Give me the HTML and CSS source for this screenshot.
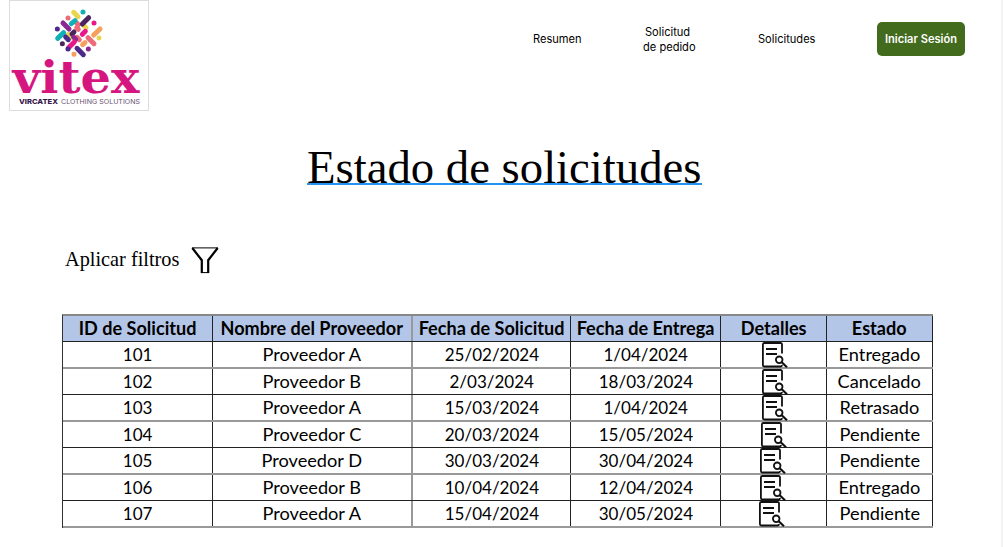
FILE: index.html
```html
<!DOCTYPE html>
<html lang="es">
<head>
<meta charset="utf-8">
<title>Estado de solicitudes</title>
<link rel="stylesheet" href="styles.css">
</head>
<body>
<svg class="defs" width="0" height="0">
  <symbol id="doc" viewBox="0 0 26 26">
    <g fill="none" stroke="#111" stroke-width="1.8">
      <path d="M20 11.5V2.5Q20 1 18.5 1H2.3Q.9 1 .9 2.5V23Q.9 24.5 2.3 24.5H18.5Q20 24.5 20 23"/>
      <path d="M4 7H15M4 12H15"/>
      <circle cx="17.2" cy="17.8" r="3.3"/>
      <path d="M19.7 20.3L25 25.2" stroke-width="2.2"/>
    </g>
  </symbol>
</svg>
<header class="top">
  <svg class="logo" viewBox="0 0 140 111" role="img" aria-label="Vitex">
    <rect x=".5" y=".5" width="139" height="110" fill="#fff" stroke="#dcdcdc"/>
    <g transform="translate(36 0) scale(.3333)" fill="none" stroke-width="15" stroke-linecap="round">
      <path stroke="#e8d44d" d="M86 37L99 50M116 76L123 83M71 103L79 111M162 114h.1"/>
      <path stroke="#ef6a78" d="M69 54h.1M93 67L100 74M95 83L100 88M129 113L147 131M96 112L103 119"/>
      <path stroke="#0fb0b8" d="M114 36h.1M79 71L90 62M38 115L56 98"/>
      <path stroke="#4a2560" d="M112 72L131 53M81 102L87 96M52 131h.1"/>
      <path stroke="#8a2a90" d="M130 147h.1M54 69L72 87M86 112L92 118"/>
      <path stroke="#e8178a" d="M147 69h.1M112 103L121 94M70 144L88 126"/>
      <path stroke="#f5a05c" d="M146 105L165 87M113 134L120 128M87 163h.1"/>
      <path stroke="#4b2a8c" d="M37 87h.1M62 111L70 119M69 147h.1M96 145L115 164"/>
    </g>
    <text class="logo-name" x="3.5" y="93" textLength="127" lengthAdjust="spacingAndGlyphs">vitex</text>
    <text class="logo-sub logo-strong" x="10" y="103.7" textLength="39" lengthAdjust="spacingAndGlyphs">VIRCATEX</text>
    <text class="logo-sub" x="52" y="103.7" textLength="79" lengthAdjust="spacingAndGlyphs">CLOTHING SOLUTIONS</text>
  </svg>
  <nav class="nav">
    <a class="n1">Resumen</a>
    <a class="n2">Solicitud<br><span class="second">de pedido</span></a>
    <a class="n3">Solicitudes</a>
    <a class="login">Iniciar Sesión</a>
  </nav>
</header>
<h1 class="title"><span class="title-text">Estado de solicitudes</span></h1>
<div class="filter">
  <span class="filter-text">Aplicar filtros</span>
  <svg class="funnel" viewBox="0 0 28 27"><path d="M1 .9H27" stroke="#000" fill="none"/><path d="M1.3 1L10.8 13.2V26M26.7 1L17.2 13.2V26" stroke="#000" stroke-width="2.2" fill="none"/><path d="M10 25.6H18" stroke="#000"/></svg>
</div>
<main class="grid">
  <div class="row head"><b><i>ID de Solicitud</i></b><b><i>Nombre del Proveedor</i></b><b><i>Fecha de Solicitud</i></b><b><i>Fecha de Entrega</i></b><b><i>Detalles</i></b><b><i>Estado</i></b></div>
  <div class="row"><b><i class="num">101</i></b><b><i>Proveedor A</i></b><b><i class="num">25/02/2024</i></b><b><i class="num">1/04/2024</i></b><b><svg class="doc"><use href="#doc"/></svg></b><b><i>Entregado</i></b></div>
  <div class="row"><b><i class="num">102</i></b><b><i>Proveedor B</i></b><b><i class="num">2/03/2024</i></b><b><i class="num">18/03/2024</i></b><b><svg class="doc"><use href="#doc"/></svg></b><b><i>Cancelado</i></b></div>
  <div class="row"><b><i class="num">103</i></b><b><i>Proveedor A</i></b><b><i class="num">15/03/2024</i></b><b><i class="num">1/04/2024</i></b><b><svg class="doc"><use href="#doc"/></svg></b><b><i>Retrasado</i></b></div>
  <div class="row"><b><i class="num">104</i></b><b><i>Proveedor C</i></b><b><i class="num">20/03/2024</i></b><b><i class="num">15/05/2024</i></b><b><svg class="doc left1"><use href="#doc"/></svg></b><b><i>Pendiente</i></b></div>
  <div class="row"><b><i class="num">105</i></b><b><i>Proveedor D</i></b><b><i class="num">30/03/2024</i></b><b><i class="num">30/04/2024</i></b><b><svg class="doc left2"><use href="#doc"/></svg></b><b><i>Pendiente</i></b></div>
  <div class="row"><b><i class="num">106</i></b><b><i>Proveedor B</i></b><b><i class="num">10/04/2024</i></b><b><i class="num">12/04/2024</i></b><b><svg class="doc left2"><use href="#doc"/></svg></b><b><i>Entregado</i></b></div>
  <div class="row"><b><i class="num">107</i></b><b><i>Proveedor A</i></b><b><i class="num">15/04/2024</i></b><b><i class="num">30/05/2024</i></b><b><svg class="doc left3"><use href="#doc"/></svg></b><b><i>Pendiente</i></b></div>
</main>
</body>
</html>
```
FILE: styles.css
```css
* { box-sizing: border-box; }
body { margin: 0; height: 547px; overflow: hidden; background: #fff; border-right: 2px solid #f3f3f3; color: #000; }
.defs { display: block; }
.top { display: flex; height: 111px; padding-left: 9px; }
.logo { width: 140px; height: 111px; flex: none; }
.logo-name { font: bold 45px "DejaVu Serif", serif; fill: #d6167f; }
.logo-sub { font: 6.6px Inter, sans-serif; fill: #66506f; }
.logo-strong { font-weight: 800; fill: #35184a; }
.nav { display: flex; align-items: center; height: 77px; padding-left: 384px; font: 11.1px/15px Inter, sans-serif; white-space: nowrap; }
.n1, .n2, .n3 { padding-top: 2px; }
.n1 { width: 110px; }
.n2 { width: 115px; padding-left: 2px; }
.second { margin-left: -2px; }
.n3 { width: 119px; }
.login { width: 88px; height: 34px; border-radius: 5px; background: #436b1e; color: #fff; font-weight: 600; font-size: 11.1px; line-height: 34px; text-align: center; }
.title { margin: 34px 0 0 307px; width: 395px; height: 40px; border-bottom: 2px solid #2492f0; font: 47px/45px "Liberation Serif", serif; white-space: nowrap; }
.title-text { display: inline-block; transform: scaleX(.994); transform-origin: 0 0; }
.filter { display: flex; margin: 61px 0 0 65px; height: 28px; }
.filter-text { width: 126px; font: 20.3px/26px "Liberation Serif", serif; white-space: nowrap; }
.funnel { width: 28px; height: 27px; margin-top: 1px; }
.grid { margin: 40px 0 0 62px; width: 871px; border-left: 1px solid #333; border-top: 2px solid #888; font: 18px/25px Lato, sans-serif; }
.row { display: grid; grid-template-columns: 150px 200px 158px 150px 106px 106px; border-bottom: 2px solid #999; }
.row:nth-child(odd) { border-bottom: 1px solid #222; }
.row b { display: flex; justify-content: center; height: 25px; border-right: 1px solid #222; font-weight: 400; white-space: nowrap; }
.row b:nth-child(2) { border-right: 2px solid #999; }
.row i { font-style: normal; transform: scaleX(1.01); }
.row .num { transform: scaleX(.945); }
.head { background: #b4c6e7; }
.row.head i { font-weight: 700; transform: scaleX(1.005); }
.doc { width: 26px; height: 26px; overflow: visible; margin-left: 2px; }
.left1 { margin-right: 2px; }
.left2 { margin-right: 3px; }
.left3 { margin-right: 5px; }
```
